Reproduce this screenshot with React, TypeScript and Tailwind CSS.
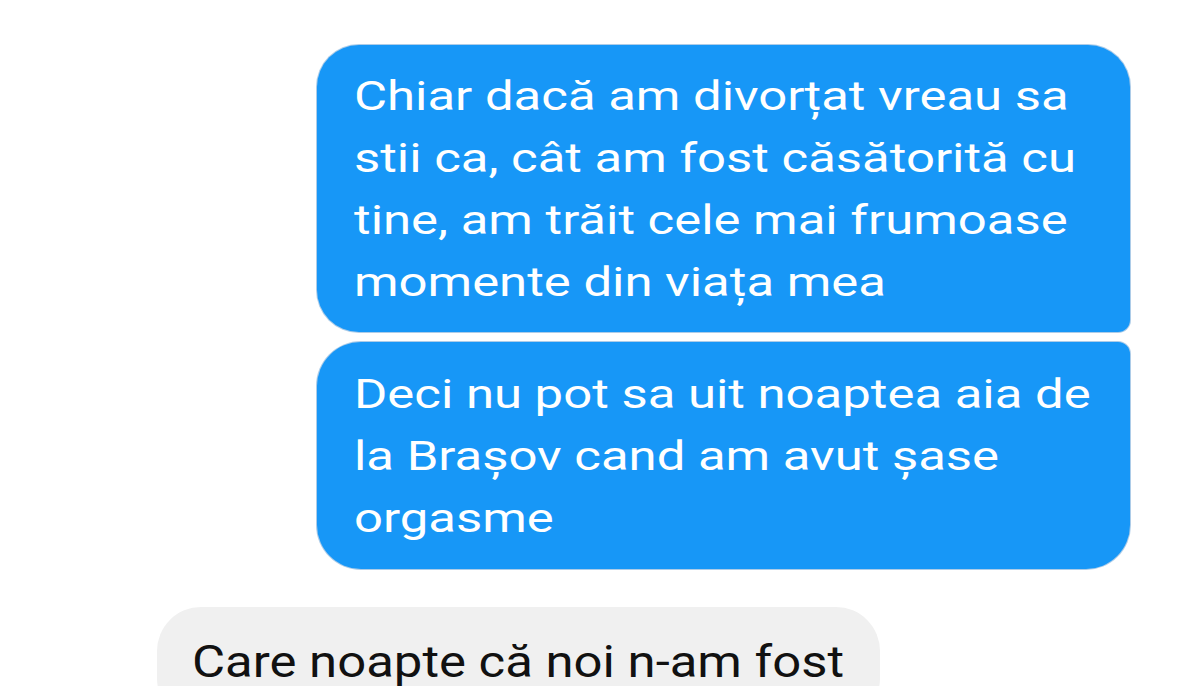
import React from 'react';

const bubbleBlue = "bg-[#1797f7] text-white w-[813px] pl-[37px] text-[41px] leading-[62px] shadow-[0_0_0_1px_rgba(20,110,190,0.35)]";
const line = "whitespace-nowrap origin-left scale-x-[1.24]";

export default function App() {
  return (
    <div className="w-[1200px] h-[686px] overflow-hidden bg-white font-['Roboto','Liberation_Sans',sans-serif]">
      <div className="flex flex-col pt-[45px]">
        <div className="flex justify-end pr-[70px]">
          <div className={`${bubbleBlue} rounded-[42px] rounded-br-[12px] pt-[20px] pb-[19px]`}>
            <div className={line}>Chiar dacă am divorțat vreau sa</div>
            <div className={line}>stii ca, cât am fost căsătorită cu</div>
            <div className={line}>tine, am trăit cele mai frumoase</div>
            <div className={line}>momente din viața mea</div>
          </div>
        </div>
        <div className="flex justify-end pr-[70px] mt-[10px]">
          <div className={`${bubbleBlue} rounded-[44px] rounded-tr-[12px] pt-[21px] pb-[20px]`}>
            <div className={line}>Deci nu pot sa uit noaptea aia de</div>
            <div className={line}>la Brașov cand am avut șase</div>
            <div className={line}>orgasme</div>
          </div>
        </div>
        <div className="flex justify-start pl-[157px] mt-[38px]">
          <div className="bg-[#f0f0f0] text-[#111] w-[723px] rounded-[44px] pl-[35px] pt-[25px] pb-[30px] text-[45px] leading-[60px]">
            <div className="whitespace-nowrap origin-left scale-x-[1.13]">Care noapte că noi n-am fost</div>
          </div>
        </div>
      </div>
    </div>
  );
}
